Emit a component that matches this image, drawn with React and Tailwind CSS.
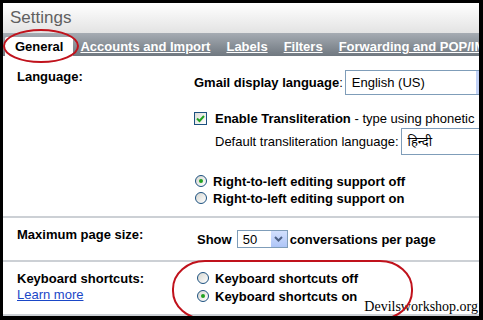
import React from "react";

function CheckBox() {
    return (
        <div className="w-[13px] h-[13px] border border-[#1c5180] bg-gradient-to-br from-[#dcdcd7] to-white flex items-center justify-center shrink-0">
            <svg width="9" height="9" viewBox="0 0 9 9">
                <path d="M1 4.5 L3.5 7 L8 2" fill="none" stroke="#21a121" strokeWidth="2" />
            </svg>
        </div>
    );
}

function Radio({ checked }) {
    return (
        <div className="w-[12px] h-[12px] rounded-full border border-[#1c5180] bg-gradient-to-br from-[#d6d6d0] to-white flex items-center justify-center shrink-0">
            {checked && <div className="w-[4px] h-[4px] rounded-full bg-[#21a121]" />}
        </div>
    );
}

function RadioLine({ checked, label }) {
    return (
        <div className="flex items-center h-[16px] font-bold whitespace-nowrap">
            <Radio checked={checked} />
            <span className="ml-[6px]">{label}</span>
        </div>
    );
}

export default function App() {
    const tabs = ["Accounts and Import", "Labels", "Filters", "Forwarding and POP/IMAP"];

    return (
        <div className="w-[483px] h-[320px] bg-black pt-[3px] pl-[3px] pr-[4px] pb-[4px] font-['Liberation_Sans',Arial,sans-serif] text-[13px] leading-[15px] text-black">
            <div className="relative h-full w-full bg-white overflow-hidden flex flex-col">

                {/* header */}
                <div className="h-[30px] shrink-0 bg-gradient-to-b from-white to-[#e3e3e3] pl-[7px] flex items-center text-[17px] leading-[20px] text-[#606060]">
                    Settings
                </div>

                {/* tabs */}
                <div className="h-[23px] shrink-0 bg-gradient-to-b from-[#a6acb3] to-[#707880] flex items-end pl-[2px] whitespace-nowrap overflow-hidden">
                    <div className="h-[19px] px-[10px] bg-white rounded-t-[2px] font-bold flex items-center shrink-0">General</div>
                    <div className="flex gap-[16px] ml-[7px] h-[19px] items-center">
                        {tabs.map((t) => (
                            <span key={t} className="text-white font-bold underline">{t}</span>
                        ))}
                    </div>
                </div>

                {/* language */}
                <div className="h-[160px] shrink-0 flex">
                    <div className="w-[191px] shrink-0 pl-[14px] pt-[13px] font-bold">Language:</div>
                    <div className="flex-1 min-w-0 pt-[14px] whitespace-nowrap">
                        <div className="flex items-center h-[25px]">
                            <span className="font-bold">Gmail display language</span>:
                            <div className="ml-[2px] flex-1 h-[25px] border border-[#7f9db9] border-r-0 flex items-center pl-[6px] relative">
                                English (US)
                                <div className="absolute right-0 top-0 bottom-0 w-[3px] bg-[#c3d3f7]" />
                            </div>
                        </div>
                        <div className="flex items-center h-[13px] mt-[17px]">
                            <CheckBox />
                            <span className="ml-[8px]"><b>Enable Transliteration</b> - type using phonetic</span>
                        </div>
                        <div className="flex items-center h-[27px] mt-[3px] pl-[21px]">
                            Default transliteration language:
                            <div className="ml-[2px] flex-1 h-[27px] border border-[#7f9db9] border-r-0 flex items-center pl-[6px] font-['Noto_Sans','Noto_Sans_Devanagari',sans-serif]">
                                हिन्दी
                            </div>
                        </div>
                        <div className="mt-[18px] pl-[1px] flex flex-col gap-[1px]">
                            <RadioLine checked label="Right-to-left editing support off" />
                            <RadioLine label="Right-to-left editing support on" />
                        </div>
                    </div>
                </div>
                <div className="h-[2px] shrink-0 bg-[#ccd0d5]" />

                {/* page size */}
                <div className="h-[42px] shrink-0 flex">
                    <div className="w-[191px] shrink-0 pl-[14px] pt-[9px] font-bold">Maximum page size:</div>
                    <div className="flex-1 min-w-0 pt-[12px] pl-[3px]">
                        <div className="flex items-center h-[18px] font-bold whitespace-nowrap">
                            Show
                            <div className="ml-[5px] w-[51px] h-[18px] border border-[#7f9db9] flex items-center justify-between font-normal">
                                <span className="pl-[5px]">50</span>
                                <div className="w-[16px] h-[16px] bg-gradient-to-b from-[#d3e0fd] to-[#aec5f7] flex items-center justify-center">
                                    <svg width="9" height="6" viewBox="0 0 9 6">
                                        <path d="M1 1 L4.5 4.5 L8 1" fill="none" stroke="#4d6185" strokeWidth="2" />
                                    </svg>
                                </div>
                            </div>
                            <span className="ml-[2px]">conversations per page</span>
                        </div>
                    </div>
                </div>
                <div className="h-[2px] shrink-0 bg-[#ccd0d5]" />

                {/* keyboard shortcuts */}
                <div className="h-[52px] shrink-0 flex">
                    <div className="w-[191px] shrink-0 pl-[14px] pt-[9px]">
                        <div className="font-bold h-[16px]">Keyboard shortcuts:</div>
                        <div className="text-[#1a47c7] underline">Learn more</div>
                    </div>
                    <div className="flex-1 min-w-0 pt-[8px] pl-[3px] flex flex-col gap-[2px]">
                        <RadioLine label="Keyboard shortcuts off" />
                        <RadioLine checked label="Keyboard shortcuts on" />
                    </div>
                </div>
                <div className="h-[2px] shrink-0 bg-[#ccd0d5]" />

                <div className="absolute right-[1px] top-[296px] font-['Liberation_Serif',serif] text-[14px] leading-[16px] text-black">
                    Devilsworkshop.org
                </div>

                <svg className="absolute inset-0 pointer-events-none" width="476" height="313">
                    <ellipse cx="38" cy="43" rx="37" ry="16" fill="none" stroke="#c0121c" strokeWidth="2" />
                    <rect x="170" y="258" width="239" height="58" rx="32" ry="28" fill="none" stroke="#c0121c" strokeWidth="2" />
                </svg>
            </div>
        </div>
    );
}
